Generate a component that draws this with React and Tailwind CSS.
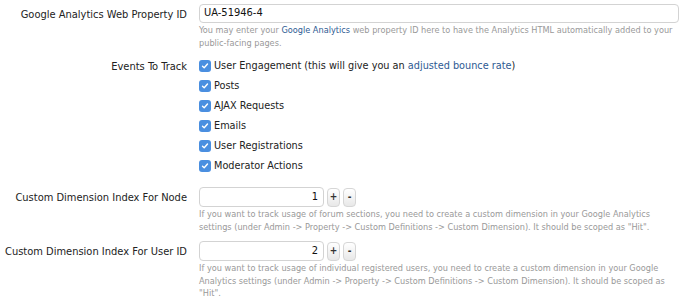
import React from 'react';

const font = { fontFamily: '"DejaVu Sans Condensed", "DejaVu Sans", sans-serif' };

function Check() {
  return (
    <span className="w-[12px] h-[12px] rounded-[3px] bg-[#4a8fe0] flex items-center justify-center shrink-0">
      <svg width="8" height="8" viewBox="0 0 8 8">
        <path d="M1.5 4.2 L3.2 5.8 L6.5 2" stroke="#fff" strokeWidth="1.4" fill="none" strokeLinecap="round" strokeLinejoin="round" />
      </svg>
    </span>
  );
}

function Spin({ children }) {
  return (
    <span className="w-[13px] h-[19px] rounded-[4px] border border-[#d6d6d6] bg-gradient-to-b from-white to-[#e8e8e8] text-[10px] font-bold text-[#333] flex items-center justify-center leading-none">
      {children}
    </span>
  );
}

function Row({ label, children, className = '' }) {
  return (
    <div className={`flex ${className}`}>
      <div className="w-[187px] shrink-0 text-right text-[11px] text-[#222] pt-[3px]">{label}</div>
      <div className="ml-[12px] flex-1 min-w-0">{children}</div>
    </div>
  );
}

const events = ['Posts', 'AJAX Requests', 'Emails', 'User Registrations', 'Moderator Actions'];

export default function App() {
  return (
    <div className="w-[685px] h-[300px] bg-white overflow-hidden pt-[4px] pr-[6px]" style={font}>
      <Row label="Google Analytics Web Property ID">
        <div className="h-[19px] border border-[#d3d3d3] rounded-[4px] bg-white px-[4px] text-[11px] text-[#111] flex items-center">UA-51946-4</div>
        <p className="mt-[1px] text-[9.1px] leading-[13px] text-[#999]">
          You may enter your <span className="text-[#2e5a93]">Google Analytics</span> web property ID here to have the Analytics HTML automatically added to your public-facing pages.
        </p>
      </Row>

      <Row label="Events To Track" className="mt-[6px]">
        <div className="flex flex-col">
          <div className="h-[20px] flex items-center gap-[3px] text-[10.8px] text-[#222]">
            <Check />
            <span>User Engagement (this will give you an <span className="text-[#2e5a93]">adjusted bounce rate</span>)</span>
          </div>
          {events.map(e => (
            <div key={e} className="h-[20px] flex items-center gap-[3px] text-[10.8px] text-[#222]">
              <Check />
              <span>{e}</span>
            </div>
          ))}
        </div>
      </Row>

      <Row label="Custom Dimension Index For Node" className="mt-[11px]">
        <div className="flex items-center gap-[3px]">
          <div className="w-[125px] h-[20px] border border-[#d3d3d3] rounded-[4px] bg-white px-[5px] text-[11px] text-[#111] flex items-center justify-end">1</div>
          <Spin>+</Spin>
          <Spin>-</Spin>
        </div>
        <p className="mt-[1px] max-w-[466px] text-[9.1px] leading-[12.5px] text-[#999]">
          If you want to track usage of forum sections, you need to create a custom dimension in your Google Analytics settings (under Admin -&gt; Property -&gt; Custom Definitions -&gt; Custom Dimension). It should be scoped as "Hit".
        </p>
      </Row>

      <Row label="Custom Dimension Index For User ID" className="mt-[8px]">
        <div className="flex items-center gap-[3px]">
          <div className="w-[125px] h-[20px] border border-[#d3d3d3] rounded-[4px] bg-white px-[5px] text-[11px] text-[#111] flex items-center justify-end">2</div>
          <Spin>+</Spin>
          <Spin>-</Spin>
        </div>
        <p className="mt-[1px] max-w-[466px] text-[9.1px] leading-[12.5px] text-[#999]">
          If you want to track usage of individual registered users, you need to create a custom dimension in your Google Analytics settings (under Admin -&gt; Property -&gt; Custom Definitions -&gt; Custom Dimension). It should be scoped as "Hit".
        </p>
      </Row>
    </div>
  );
}
